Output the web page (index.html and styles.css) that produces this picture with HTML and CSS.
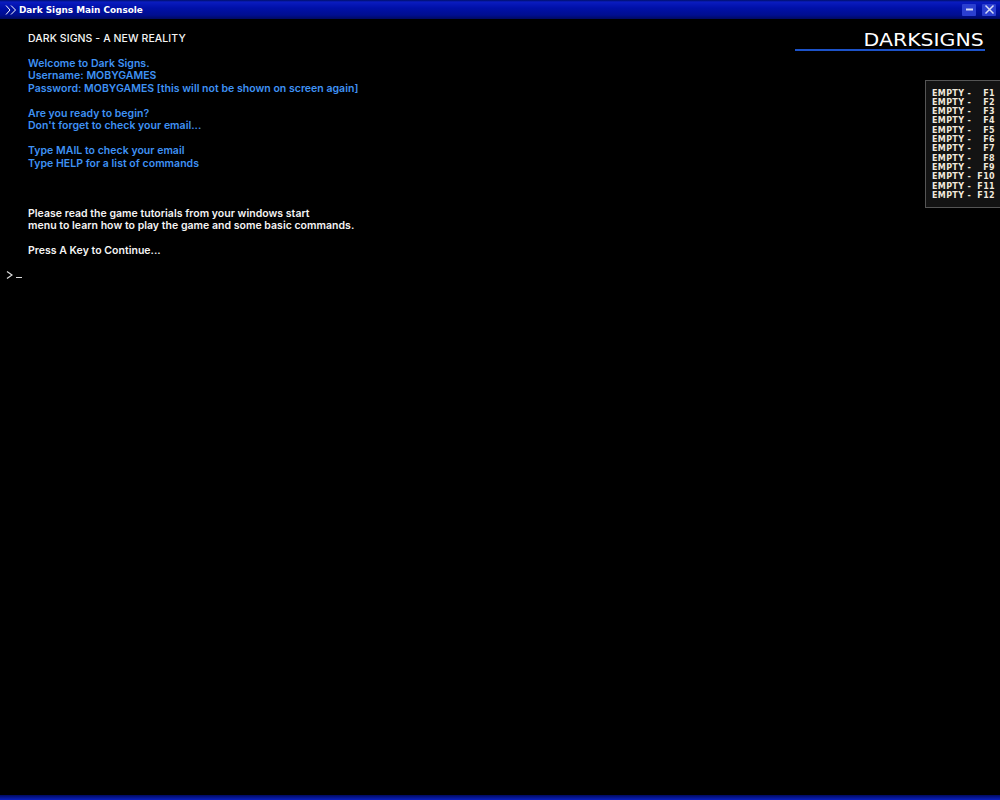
FILE: index.html
```html
<!DOCTYPE html>
<html lang="en">
<head>
<meta charset="utf-8">
<title>Dark Signs Main Console</title>
<link rel="stylesheet" href="styles.css">
</head>
<body>
<div class="window">
  <header class="titlebar">
    <svg class="chevrons" width="12" height="10" viewBox="0 0 12 10"><path d="M1 .5 5 5 1 9.500M6 .5 10.500 5 6 9.500" fill="none" stroke="#fff" stroke-width="1"/></svg>
    <span class="title">Dark Signs Main Console</span>
    <div class="controls">
      <span class="ctl"><svg width="13" height="13" viewBox="0 0 13 13"><path d="M3 6.500h7" stroke="#d8dcf5" stroke-width="2"/></svg></span>
      <span class="ctl"><svg width="13" height="13" viewBox="0 0 13 13"><path d="M2.500 2.500l8 8M10.500 2.500l-8 8" stroke="#d8dcf5" stroke-width="1.500"/></svg></span>
    </div>
  </header>
  <main class="screen">
    <div class="console">
      <p class="line white heading">DARK SIGNS - A NEW REALITY</p>
      <p class="line blank"></p>
      <p class="line blue">Welcome to Dark Signs.</p>
      <p class="line blue">Username: MOBYGAMES</p>
      <p class="line blue">Password: MOBYGAMES [this will not be shown on screen again]</p>
      <p class="line blank"></p>
      <p class="line blue">Are you ready to begin?</p>
      <p class="line blue">Don't forget to check your email...</p>
      <p class="line blank"></p>
      <p class="line blue">Type MAIL to check your email</p>
      <p class="line blue">Type HELP for a list of commands</p>
      <p class="line blank"></p>
      <p class="line blank"></p>
      <p class="line blank"></p>
      <p class="line white">Please read the game tutorials from your windows start</p>
      <p class="line white">menu to learn how to play the game and some basic commands.</p>
      <p class="line blank"></p>
      <p class="line white">Press A Key to Continue...</p>
      <div class="prompt"><svg width="7" height="8" viewBox="0 0 7 8"><path d="M1 .5 6 4 1 7.500" fill="none" stroke="#ddd" stroke-width="1.200"/></svg><span class="cursor"></span></div>
    </div>
    <div class="logo"><span class="logotext">DARKSIGNS</span></div>
    <aside class="fkeys">
      <div class="fkey"><span>EMPTY -</span><span>F1</span></div>
      <div class="fkey"><span>EMPTY -</span><span>F2</span></div>
      <div class="fkey"><span>EMPTY -</span><span>F3</span></div>
      <div class="fkey"><span>EMPTY -</span><span>F4</span></div>
      <div class="fkey"><span>EMPTY -</span><span>F5</span></div>
      <div class="fkey"><span>EMPTY -</span><span>F6</span></div>
      <div class="fkey"><span>EMPTY -</span><span>F7</span></div>
      <div class="fkey"><span>EMPTY -</span><span>F8</span></div>
      <div class="fkey"><span>EMPTY -</span><span>F9</span></div>
      <div class="fkey"><span>EMPTY -</span><span>F10</span></div>
      <div class="fkey"><span>EMPTY -</span><span>F11</span></div>
      <div class="fkey"><span>EMPTY -</span><span>F12</span></div>
    </aside>
  </main>
  <footer class="bottombar"></footer>
</div>
</body>
</html>
```
FILE: styles.css
```css
* { box-sizing: border-box; }
html, body { margin: 0; height: 100%; background: #000; overflow: hidden; }
.window { width: 1000px; height: 800px; display: flex; flex-direction: column; background: #000; }
.titlebar {
  height: 19px; display: flex; align-items: center; padding: 0 0 0 5px;
  background: linear-gradient(#00106a 0, #0a1cc0 2px, #0010a8 8px, #000e90 15px, #000a60 19px);
  flex: none;
}
.chevrons { flex: none; }
.title { margin-left: 2px; font: bold 8.900px "DejaVu Sans", sans-serif; color: #fff; }
.controls { margin-left: auto; display: flex; gap: 6px; padding-right: 4px; }
.ctl { width: 14px; height: 12px; background: #2b3fd0; display: flex; align-items: center; justify-content: center; border-radius: 1px; }
.screen { flex: 1; position: relative; display: flex; justify-content: space-between; }
.console { padding: 13.500px 0 0 28px; font: 600 10.500px/12.500px "Inter", sans-serif; letter-spacing: .03px; }
.line { margin: 0; height: 12.500px; white-space: nowrap; }
.heading { font-weight: 500; letter-spacing: .08px; }
.white { color: #f4f4f4; }
.blue { color: #3f92f4; }
.prompt { display: flex; align-items: flex-end; gap: 3px; margin: 9.500px 0 0 -22px; height: 12px; }
.cursor { width: 6px; height: 1px; background: #ddd; margin-bottom: 1px; }
.logo { width: 190px; height: 32px; margin: 0 15px 0 0; padding: 13px 1px 0 0; border-bottom: 2px solid #1c52c8; text-align: right; }
.logotext { display: inline-block; font: 17.500px/14px "DejaVu Sans", sans-serif; color: #fff; transform-origin: right; transform: scaleX(1.170); }
.fkeys {
  position: absolute; top: 61px; right: 0; width: 75px; height: 128px;
  padding: 7.500px 5px 0 6px; background: #131313; border: 1px solid #555; border-right: 0;
  font: bold 8px/9.330px "DejaVu Sans", sans-serif; color: #f0e8dc; letter-spacing: .35px;
}
.fkey { display: flex; justify-content: space-between; height: 9.330px; }
.bottombar { height: 5px; flex: none; background: linear-gradient(#000a60, #0a20c0); }
```
